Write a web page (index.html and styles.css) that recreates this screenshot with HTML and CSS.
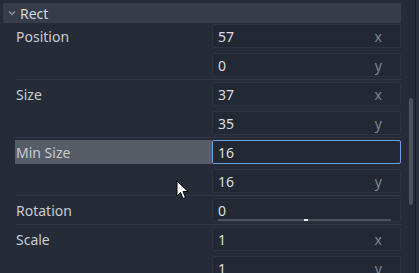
FILE: index.html
```html
<!DOCTYPE html>
<html lang="en">
  <head>
    <meta charset="UTF-8" />
    <meta name="viewport" content="width=device-width, initial-scale=1.0" />
    <title>Inspector - Rect</title>
    <link rel="stylesheet" href="styles.css">
  </head>
  <body>
    <div class="inspector">
      <div class="panel">
        <div class="section-head">
          <svg class="arrow" width="8" height="6" viewBox="0 0 8 6">
            <path d="M1 1.5 L4 4.5 L7 1.5" fill="none" stroke="#8c909a" stroke-width="1.5" />
          </svg>
          <span>Rect</span>
        </div>

        <div class="prop">
          <div class="prop-label">Position</div>
          <div class="prop-fields">
            <div class="field"><span>57</span><span class="axis">x</span></div>
            <div class="field"><span>0</span><span class="axis">y</span></div>
          </div>
        </div>
        <div class="sep"></div>

        <div class="prop">
          <div class="prop-label">Size</div>
          <div class="prop-fields">
            <div class="field"><span>37</span><span class="axis">x</span></div>
            <div class="field"><span>35</span><span class="axis">y</span></div>
          </div>
        </div>
        <div class="sep"></div>

        <div class="prop">
          <div class="prop-label selected">Min Size</div>
          <div class="prop-fields">
            <div class="field focused"><span>16</span></div>
            <div class="field"><span>16</span><span class="axis">y</span></div>
          </div>
        </div>
        <div class="sep"></div>

        <div class="prop">
          <div class="prop-label">Rotation</div>
          <div class="prop-fields">
            <div class="field slider">
              <span>0</span>
              <div class="slider-line"><div class="grabber"></div></div>
            </div>
          </div>
        </div>
        <div class="sep"></div>

        <div class="prop">
          <div class="prop-label">Scale</div>
          <div class="prop-fields">
            <div class="field"><span>1</span><span class="axis">x</span></div>
            <div class="field"><span>1</span><span class="axis">y</span></div>
          </div>
        </div>
      </div>

      <div class="scroll">
        <div class="thumb"></div>
      </div>
      <div class="edge"></div>

      <!-- mouse pointer over the panel -->
      <svg class="cursor" width="14" height="21" viewBox="0 0 14 21">
        <path d="M1 1 L1 16 L4.5 12.5 L7 18.5 L9.5 17.5 L7 11.5 L12 11.5 Z" fill="#ffffff" stroke="#000000" stroke-width="1" stroke-linejoin="round" />
      </svg>
    </div>
  </body>
</html>
```

FILE: styles.css
```css
* {
  margin: 0;
  padding: 0;
  box-sizing: border-box;
  font-family: "Noto Sans", "DejaVu Sans", sans-serif;
}
body {
  width: 419px;
  height: 273px;
  overflow: hidden;
  background-color: #262b38;
}
.inspector {
  position: relative;
  display: flex;
  height: 273px;
}
.panel {
  width: 403px;
  padding-top: 3px;
  padding-right: 2px;
}
.section-head {
  display: flex;
  align-items: center;
  height: 20px;
  margin-left: 3px;
  margin-bottom: 1px;
  background: #363c49;
  color: #d4d6da;
  font-size: 14px;
}
.section-head .arrow {
  margin-left: 5px;
  margin-right: 4px;
}
.prop {
  display: flex;
  margin-left: 15px;
}
.prop-label {
  width: 197px;
  height: 24px;
  line-height: 24px;
  padding: 1px 0 0 1px;
  font-size: 14px;
  color: #c9cbd0;
}
.prop-label.selected {
  background: #575c67;
}
.prop-fields {
  flex: 1;
  display: flex;
  flex-direction: column;
  gap: 5px;
}
.field {
  position: relative;
  display: flex;
  justify-content: space-between;
  height: 24px;
  line-height: 22px;
  padding: 1px 18px 0 5px;
  background: #232835;
  border: 1px solid #2d3341;
  border-radius: 2px;
  font-size: 14px;
  color: #dcdee2;
}
.field.focused {
  border-color: #6e9fe0;
}
.field .axis {
  color: #80858e;
}
.slider-line {
  position: absolute;
  left: 5px;
  right: 9px;
  top: 20px;
  height: 2px;
  background: #4b515d;
}
.grabber {
  position: absolute;
  left: 86px;
  top: 0;
  width: 4px;
  height: 2px;
  background: #e8e9eb;
}
.sep {
  height: 1px;
  margin: 2px 0 2px 15px;
  background: #313746;
}
.scroll {
  width: 12px;
  padding: 98px 0 0 6px;
}
.thumb {
  width: 4px;
  height: 107px;
  border-radius: 2px;
  background: #4c525e;
}
.edge {
  width: 4px;
  border-left: 1px solid #1b1f28;
  background: #2a303d;
}
.cursor {
  position: absolute;
  left: 176px;
  top: 180px;
}
```
